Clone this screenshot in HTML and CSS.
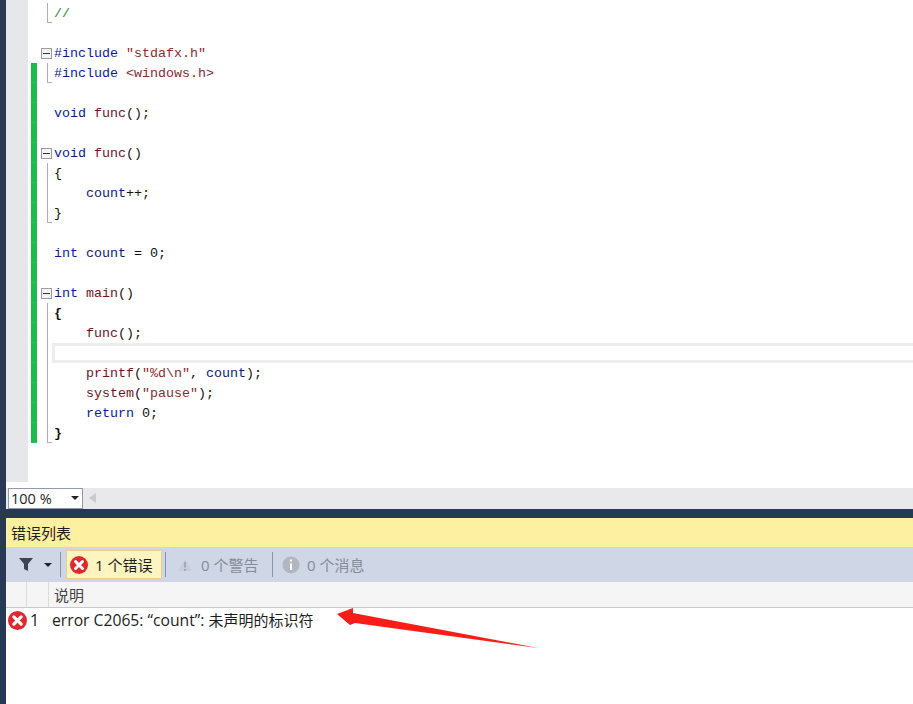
FILE: index.html
```html
<!DOCTYPE html>
<html lang="zh">
<head>
<meta charset="utf-8">
<title>错误列表</title>
<link rel="stylesheet" href="styles.css">
</head>
<body>
<div class="frame">
  <div class="edge"></div>
  <div class="main">
    <div class="editor">
      <div class="margin"></div>
      <div class="code">
        <div class="line"><span class="mark"></span><span class="fold end"></span><span class="text c">//</span></div>
        <div class="line"><span class="mark"></span><span class="fold"></span><span class="text"></span></div>
        <div class="line"><span class="mark"></span><span class="fold"><i class="box"></i></span><span class="text"><b class="k">#include</b> <b class="s">"stdafx.h"</b></span></div>
        <div class="line"><span class="mark on"></span><span class="fold end"></span><span class="text"><b class="k">#include</b> <b class="s">&lt;windows.h&gt;</b></span></div>
        <div class="line"><span class="mark on"></span><span class="fold"></span><span class="text"></span></div>
        <div class="line"><span class="mark on"></span><span class="fold"></span><span class="text"><b class="k">void</b> <b class="f">func</b>();</span></div>
        <div class="line"><span class="mark on"></span><span class="fold"></span><span class="text"></span></div>
        <div class="line"><span class="mark on"></span><span class="fold"><i class="box"></i></span><span class="text"><b class="k">void</b> <b class="f">func</b>()</span></div>
        <div class="line"><span class="mark on"></span><span class="fold run"></span><span class="text">{</span></div>
        <div class="line"><span class="mark on"></span><span class="fold run"></span><span class="text">    <b class="v">count</b>++;</span></div>
        <div class="line"><span class="mark on"></span><span class="fold end"></span><span class="text">}</span></div>
        <div class="line"><span class="mark on"></span><span class="fold"></span><span class="text"></span></div>
        <div class="line"><span class="mark on"></span><span class="fold"></span><span class="text"><b class="k">int</b> <b class="v">count</b> = 0;</span></div>
        <div class="line"><span class="mark on"></span><span class="fold"></span><span class="text"></span></div>
        <div class="line"><span class="mark on"></span><span class="fold"><i class="box"></i></span><span class="text"><b class="k">int</b> <b class="f">main</b>()</span></div>
        <div class="line"><span class="mark on"></span><span class="fold run"></span><span class="text strong">{</span></div>
        <div class="line"><span class="mark on"></span><span class="fold run"></span><span class="text">    <b class="f">func</b>();</span></div>
        <div class="line"><span class="mark on"></span><span class="fold run"></span><span class="text current"></span></div>
        <div class="line"><span class="mark on"></span><span class="fold run"></span><span class="text">    <b class="f">printf</b>(<b class="s">"%d\n"</b>, <b class="v">count</b>);</span></div>
        <div class="line"><span class="mark on"></span><span class="fold run"></span><span class="text">    <b class="f">system</b>(<b class="s">"pause"</b>);</span></div>
        <div class="line"><span class="mark on"></span><span class="fold run"></span><span class="text">    <b class="k">return</b> 0;</span></div>
        <div class="line"><span class="mark on"></span><span class="fold end"></span><span class="text strong">}</span></div>
      </div>
    </div>
    <div class="zoombar">
      <div class="zoom"><span>100 %</span><i class="caret"></i></div>
      <i class="scroll-left"></i>
    </div>
    <div class="divider"></div>
    <div class="title">错误列表</div>
    <div class="toolbar">
      <div class="filter">
        <svg class="funnel" width="14" height="13" viewBox="0 0 14 13"><path d="M0 0H14L9 6V13L5 11V6Z" fill="#3f4450"/></svg>
        <i class="caret"></i>
      </div>
      <i class="sep"></i>
      <div class="toggle active">
        <svg width="18" height="18" viewBox="0 0 18 18"><circle cx="9" cy="9" r="9" fill="#e1282e"/><path d="M5.500 5.500L12.500 12.500M12.500 5.500L5.500 12.500" stroke="#fff" stroke-width="3" stroke-linecap="round"/></svg>
        <span>1 个错误</span>
      </div>
      <i class="sep"></i>
      <div class="toggle muted warn">
        <svg width="16" height="16" viewBox="0 0 16 16"><path d="M8 2L15 14H1Z" fill="#c6ccd9"/><path d="M7 5H9V10.500H7ZM7 12H9V14H7Z" fill="#a3a8b3"/></svg>
        <span>0 个警告</span>
      </div>
      <i class="sep"></i>
      <div class="toggle muted info">
        <svg width="18" height="18" viewBox="0 0 18 18"><circle cx="9" cy="9" r="8.500" fill="#b1b6c0"/><path d="M8 3.500H10V5.500H8ZM8 7.500H10V14H8Z" fill="#fff"/></svg>
        <span>0 个消息</span>
      </div>
    </div>
    <div class="thead">
      <span class="th icon-col"></span><span class="th num-col"></span><span class="th">说明</span>
    </div>
    <div class="row">
      <svg class="row-icon" width="19" height="19" viewBox="0 0 18 18"><circle cx="9" cy="9" r="9" fill="#e1282e"/><path d="M5.500 5.500L12.500 12.500M12.500 5.500L5.500 12.500" stroke="#fff" stroke-width="3" stroke-linecap="round"/></svg>
      <span class="row-num">1</span>
      <span class="row-text"><span class="latin">error C2065: “count”: </span>未声明的标识符</span>
    </div>
  </div>
  <svg class="arrow" width="913" height="704" viewBox="0 0 913 704"><polygon points="337,614 353,608 353,613 538,648 355,623 350,625" fill="#fb1d17"/></svg>
</div>
</body>
</html>
```
FILE: styles.css
```css
* { box-sizing: border-box; }
html, body { margin: 0; padding: 0; background: #fff; }
.frame { position: relative; display: flex; width: 913px; height: 704px; overflow: hidden; }
.edge { width: 6px; flex: none; background: #293955; }
.main { flex: 1; min-width: 0; display: flex; flex-direction: column; font-family: "Open Sans", "Noto Sans CJK SC", sans-serif; font-size: 15px; color: #1e1e1e; }

.editor { height: 482px; display: flex; flex: none; background: #fff; }
.margin { width: 22px; flex: none; background: #e6e7ea; }
.code { flex: 1; min-width: 0; padding: 3px 0 0 3px; }
.line { display: flex; height: 20px; }
.mark { width: 6px; flex: none; }
.mark.on { background: #1dbb4b; box-shadow: inset 0 -1px 0 #22c255; }
.fold { position: relative; width: 17px; flex: none; }
.fold.run::before, .fold.end::before { content: ""; position: absolute; left: 10px; top: 0; bottom: 0; width: 1px; background: #b5a9b3; }
.fold.end::after { content: ""; position: absolute; left: 10px; bottom: 0; width: 5px; height: 1px; background: #b5a9b3; }
.box { position: absolute; left: 4px; top: 5px; width: 11px; height: 11px; border: 1px solid #9b9ba3; background: #f4f4f6; }
.box::after { content: ""; position: absolute; left: 1px; top: 4px; width: 7px; height: 1px; background: #333; }
.text { flex: 1; min-width: 0; padding-top: 1px; font: 13.33px/20px "Liberation Mono", monospace; white-space: pre; color: #111; }
.text b { font-weight: normal; }
.strong { font-weight: bold; }
.k { color: #0b1b9a; }
.s { color: #8f2a2a; }
.f { color: #74141c; }
.v { color: #0b1b7a; }
.c { color: #1f8a3a; }
.current { margin-left: -2px; padding-top: 0; border: 3px solid #eeeeee; border-right: 0; }

.zoombar { height: 27px; flex: none; display: flex; align-items: flex-start; padding: 6px 0 0 0; background: linear-gradient(#fff 6px, #e9e9ec 6px); }
.zoom { width: 75px; height: 21px; margin-left: 2px; flex: none; display: flex; align-items: center; justify-content: space-between; padding: 0 3px 1px 2px; background: #fff; border: 1px solid #8f9aa8; font-family: "Open Sans", sans-serif; font-size: 14.5px; }
.caret { display: inline-block; width: 0; height: 0; border-style: solid; border-width: 4px 4px 0; border-color: #222 transparent transparent; }
.scroll-left { width: 0; height: 0; margin: 5px 0 0 6px; border-style: solid; border-width: 5px 7px 5px 0; border-color: transparent #c8ccd2 transparent transparent; }
.divider { height: 9px; flex: none; background: #293955; }

.title { height: 29px; flex: none; padding: 0 0 0 5px; background: #fdf0a0; font-size: 15px; line-height: 30px; font-family: "Noto Sans CJK SC", sans-serif; }
.toolbar { height: 35px; flex: none; display: flex; align-items: center; background: #cfd6e5; }
.filter { width: 54px; flex: none; display: flex; align-items: center; padding-left: 13px; gap: 11px; }
.funnel { display: block; }
.sep { width: 1px; height: 25px; flex: none; background: #8b94a5; }
.toggle { display: flex; align-items: center; gap: 7px; height: 29px; }
.toggle span { font-size: 15px; white-space: pre; line-height: 20px; }
.active { width: 96px; margin: 0 3px 0 5px; background: #fdf4bf; border: 1px solid #e5d28f; border-radius: 1px; padding: 0 0 0 3px; }
.muted { color: #868c98; }
.warn { width: 106px; padding-left: 11px; gap: 8px; }
.info { padding-left: 9px; gap: 7px; }

.thead { height: 26px; flex: none; display: flex; background: #f5f5f5; border-bottom: 1px solid #c9c9c9; }
.th { display: block; padding-left: 5px; line-height: 25px; font-size: 15px; color: #444; font-family: "Noto Sans CJK SC", sans-serif; }
.icon-col { width: 21px; padding: 0; border-right: 1px solid #dcdcdc; }
.num-col { width: 22px; padding: 0; border-right: 1px solid #dcdcdc; }

.row { display: flex; align-items: center; height: 24px; }
.row-icon { margin-left: 2px; flex: none; }
.row-num { width: 25px; flex: none; padding-left: 3px; font-size: 16px; }
.row-text { font-size: 15px; white-space: pre; font-family: "Open Sans", "Noto Sans CJK SC", sans-serif; }
.latin { font-size: 15.7px; }

.arrow { position: absolute; left: 0; top: 0; pointer-events: none; }
```
